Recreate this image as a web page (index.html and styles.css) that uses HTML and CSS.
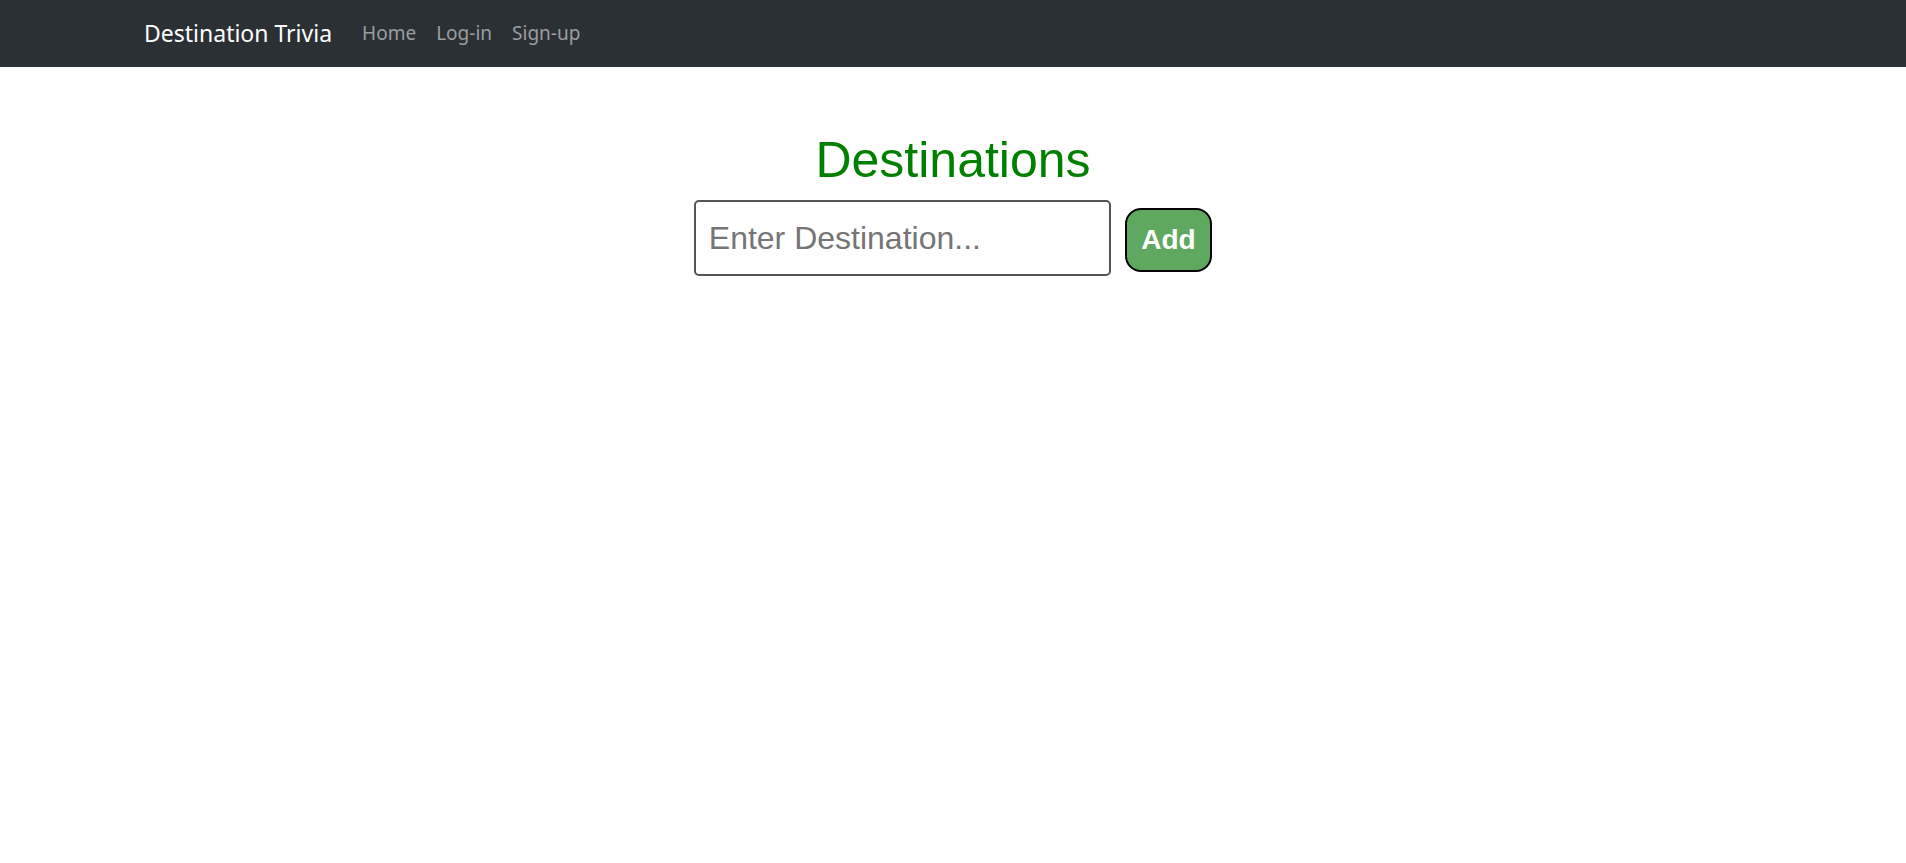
FILE: index.html
```html
<!DOCTYPE html>
<html lang="en">
<head>
<meta charset="utf-8">
<title>Destination Trivia</title>
<link rel="stylesheet" href="styles.css">
</head>
<body>
<nav class="navbar">
  <a class="brand" href="#">Destination Trivia</a>
  <ul class="nav-links">
    <li><a href="#">Home</a></li>
    <li><a href="#">Log-in</a></li>
    <li><a href="#">Sign-up</a></li>
  </ul>
</nav>
<main class="main">
  <h1 class="title">Destinations</h1>
  <form class="add-form">
    <input class="dest-input" type="text" placeholder="Enter Destination...">
    <button class="add-btn" type="button">Add</button>
  </form>
</main>
</body>
</html>
```

FILE: styles.css
```css
html, body {
  margin: 0;
  padding: 0;
  background: #ffffff;
}

body {
  font-family: "Noto Sans", "Open Sans", sans-serif;
}

.navbar {
  height: 67px;
  background: #2b3035;
  display: flex;
  align-items: center;
  padding-left: 144px;
  padding-bottom: 1px;
  box-sizing: border-box;
}

.brand {
  color: #ffffff;
  text-decoration: none;
  font-size: 23px;
  margin-right: 30px;
}

.nav-links {
  list-style: none;
  display: flex;
  gap: 20px;
  margin: 0;
  padding: 0;
}

.nav-links a {
  color: #9b9ea1;
  text-decoration: none;
  font-size: 19px;
}

.main {
  display: flex;
  flex-direction: column;
  align-items: center;
  font-family: "Liberation Sans", Arial, sans-serif;
}

.title {
  margin: 66px 0 12px;
  font-size: 50px;
  font-weight: normal;
  line-height: 55px;
  color: #008000;
}

.add-form {
  display: flex;
  align-items: center;
  gap: 14px;
  margin: 0;
}

.dest-input {
  box-sizing: border-box;
  width: 417px;
  height: 76px;
  padding: 0 13px;
  border: 2px solid #555555;
  border-radius: 5px;
  font-family: "Liberation Sans", Arial, sans-serif;
  font-size: 32px;
  color: #222;
  outline: none;
}

.dest-input::placeholder {
  color: #757575;
}

.add-btn {
  box-sizing: border-box;
  height: 64px;
  padding: 0 14.5px;
  margin-top: 4px;
  background: #5fa85f;
  border: 2px solid #000000;
  border-radius: 16px;
  color: #ffffff;
  font-family: "Liberation Sans", Arial, sans-serif;
  font-weight: bold;
  font-size: 28px;
}
```
